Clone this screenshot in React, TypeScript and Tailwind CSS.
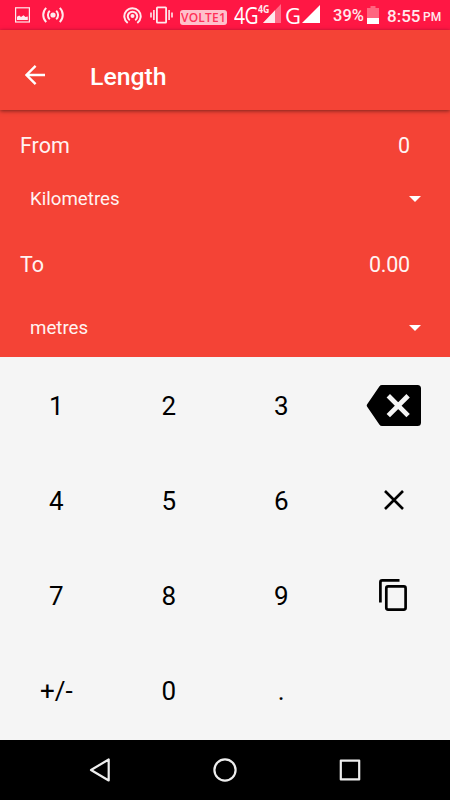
import type { ReactNode } from "react";

const keys = ["1", "2", "3", "del", "4", "5", "6", "clear", "7", "8", "9", "copy", "+/-", "0", ".", ""];

function StatusBar() {
  return (
    <div className="flex h-[30px] items-center bg-[#ff1744] font-['Roboto',sans-serif] text-[#ffe9ed]">
      {/* Notifications */}
      <svg className="ml-[15px] shrink-0" width="15" height="16" viewBox="0 0 15 16" fill="none">
        <rect x="0.6" y="0.8" width="13.8" height="14.2" stroke="currentColor" strokeWidth="1.2" />
        <path d="M2 13V9.8L4.2 8.4L6 10L8.5 8.2L10.5 10L12.8 9.6V13Z" fill="currentColor" />
      </svg>
      <svg className="ml-3 shrink-0" width="22" height="18" viewBox="0 0 22 18" fill="none" stroke="currentColor" strokeWidth="2">
        <circle cx="11" cy="9" r="2.6" fill="currentColor" stroke="none" />
        <path d="M7.8 4.8a5.6 5.6 0 0 0 0 8.4M14.2 4.8a5.6 5.6 0 0 1 0 8.4M4.2 1.9a10 10 0 0 0 0 14.2M17.8 1.9a10 10 0 0 1 0 14.2" />
      </svg>

      {/* System icons */}
      <svg className="ml-[59px] shrink-0" width="19" height="18" viewBox="0 0 19 18" fill="none" stroke="currentColor" strokeWidth="2">
        <circle cx="9.5" cy="10" r="2" fill="currentColor" stroke="none" />
        <path d="M6.8 14.2a4.7 4.7 0 1 1 5.4 0M4.7 17a8.2 8.2 0 1 1 9.6 0" />
      </svg>
      <svg className="ml-2 shrink-0" width="23" height="18" viewBox="0 0 23 18" fill="none" stroke="currentColor">
        <rect x="6.9" y="1.4" width="9.2" height="15.2" rx="0.6" strokeWidth="1.8" />
        <path d="M3.9 4v10M19.1 4v10M1 6.4v5.2M22 6.4v5.2" strokeWidth="1.6" />
      </svg>
      <div className="ml-[7px] mt-[5px] flex h-[15px] w-[47px] shrink-0 items-center justify-center rounded-[3px] bg-[#ffc0cb] font-['Open_Sans',sans-serif] text-[12px] font-semibold leading-none tracking-[0.2px] text-[#ff3158]">
        VOLTE1
      </div>
      <div className="ml-[7px] w-6 shrink-0">
        <span className="inline-block origin-left scale-x-[0.84] font-['Open_Sans',sans-serif] text-[23px] leading-[30px] tracking-[-0.6px] text-white">
          4G
        </span>
      </div>
      <div className="relative h-[30px] w-[23px] shrink-0">
        <svg className="absolute left-[5px] top-1" width="18" height="19" viewBox="0 0 18 19" fill="currentColor">
          <path d="M18 0V19H0Z" opacity="0.4" />
          <path d="M12 6.3V19H0Z" />
        </svg>
        <span className="absolute left-0 top-[5px] origin-left scale-x-[0.88] bg-[#ff1744] font-['Open_Sans',sans-serif] text-[10px] font-bold leading-[9px]">
          4G
        </span>
      </div>
      <span className="ml-1 w-4 shrink-0 font-['Open_Sans',sans-serif] text-[22px] leading-[29px] text-white">G</span>
      <svg className="mb-0.5 ml-px shrink-0" width="18" height="18" viewBox="0 0 18 18" fill="#fff">
        <path d="M18 0V18H0Z" />
      </svg>
      <span className="ml-[13px] mt-[2px] w-[32px] shrink-0 text-[16.5px] font-medium leading-[30px]">39%</span>
      <svg className="ml-[2px] shrink-0" width="12" height="18" viewBox="0 0 12 18">
        <path d="M0 2H3.5V0H8.5V2H12V18H0Z" fill="#ff6680" />
        <rect y="12" width="12" height="6" fill="#fff" />
      </svg>
      <span className="ml-[8px] mt-[2px] w-[36px] shrink-0 text-[17px] font-medium leading-[30px]">8:55</span>
      <span className="mt-1 text-[12px] font-medium leading-[30px]">PM</span>
    </div>
  );
}

function UnitSelect({ children }: { children: ReactNode }) {
  return (
    <button className="flex h-[30px] w-full items-center justify-between pl-[30px] pr-[29px] text-[18.7px] leading-[30px] text-[#fff3f2]">
      <span>{children}</span>
      <svg width="12" height="6" viewBox="0 0 12 6" fill="#fff">
        <path d="M0 0H12L6 6Z" />
      </svg>
    </button>
  );
}

function Reading({ label, value }: { label: string; value: string }) {
  return (
    <div className="flex h-[30px] items-center justify-between pl-5 pr-10 pt-0.5 text-[21.5px] leading-[30px] text-[#fff3f2]">
      <span>{label}</span>
      <span className="tracking-[-0.2px]">{value}</span>
    </div>
  );
}

function KeyFace({ name }: { name: string }) {
  if (name === "del") {
    return (
      <svg className="-mt-[3px]" width="56" height="41" viewBox="0 0 56 41">
        <path d="M13.5 1.2Q14.3 0 16 0H51.5Q55 0 55 3.5V37.5Q55 41 51.5 41H16Q14.3 41 13.5 39.8L1 21.5Q0.4 20.5 1 19.5Z" fill="#000" />
        <path d="M22.3 10.8L42.1 30.6M42.1 10.8L22.3 30.6" stroke="#f5f5f5" strokeWidth="4.8" />
      </svg>
    );
  }
  if (name === "clear") {
    return (
      <svg className="-mt-[3px]" width="20" height="20" viewBox="0 0 20 20" stroke="#000" strokeWidth="2.6">
        <path d="M1 1L19 19M19 1L1 19" />
      </svg>
    );
  }
  if (name === "copy") {
    return (
      <svg className="-mt-[3px] mr-[2px]" width="28" height="32" viewBox="0 0 28 32" fill="none" stroke="#000" strokeWidth="2.7">
        <path d="M20.5 1.4H3.2Q1.4 1.4 1.4 3.2V23.5" />
        <rect x="7.3" y="7.4" width="19.3" height="23.2" rx="1.8" />
      </svg>
    );
  }
  return <>{name}</>;
}

export default function App() {
  return (
    <div className="flex h-[800px] w-[450px] flex-col overflow-hidden bg-[#f5f5f5] font-['Roboto',sans-serif]">
      <StatusBar />

      {/* Toolbar */}
      <header className="z-10 flex h-20 shrink-0 items-center bg-[#f44336] pt-3 text-white shadow-[0_1px_4px_rgba(0,0,0,0.5)]">
        <svg className="-mt-[2px] ml-[25px]" width="20" height="20" viewBox="0 0 20 20" fill="none" stroke="currentColor" strokeWidth="2.4">
          <path d="M20 10H2M10.6 0.9L1.5 10L10.6 19.1" />
        </svg>
        <h1 className="ml-[45px] pt-px text-[24.8px] font-medium leading-8">Length</h1>
      </header>

      {/* Conversion */}
      <section className="flex h-[247px] shrink-0 flex-col bg-[#f44336] pt-5">
        <Reading label="From" value="0" />
        <div className="mt-6">
          <UnitSelect>Kilometres</UnitSelect>
        </div>
        <div className="mt-[35px]">
          <Reading label="To" value="0.00" />
        </div>
        <div className="mt-[34px]">
          <UnitSelect>metres</UnitSelect>
        </div>
      </section>

      {/* Keypad */}
      <main className="grid h-[383px] shrink-0 auto-rows-[95px] grid-cols-4 pt-[2px] text-[26px] text-black">
        {keys.map((key, i) => (
          <button key={i} className="flex items-center justify-center">
            <KeyFace name={key} />
          </button>
        ))}
      </main>

      {/* Navigation bar */}
      <nav className="flex h-[60px] shrink-0 items-center bg-black text-[#eee]">
        <svg className="ml-[89px]" width="22" height="24" viewBox="0 0 22 24" fill="none" stroke="currentColor" strokeWidth="2.2" strokeLinejoin="round">
          <path d="M19.7 1.5V22.5L2 12Z" />
        </svg>
        <svg className="ml-[102px]" width="24" height="24" viewBox="0 0 24 24" fill="none" stroke="currentColor" strokeWidth="2.2">
          <circle cx="12" cy="12" r="10.6" />
        </svg>
        <svg className="ml-[102px]" width="22" height="22" viewBox="0 0 22 22" fill="none" stroke="currentColor" strokeWidth="2.2" strokeLinejoin="round">
          <rect x="1.8" y="1.6" width="18.4" height="18.8" />
        </svg>
      </nav>
    </div>
  );
}
